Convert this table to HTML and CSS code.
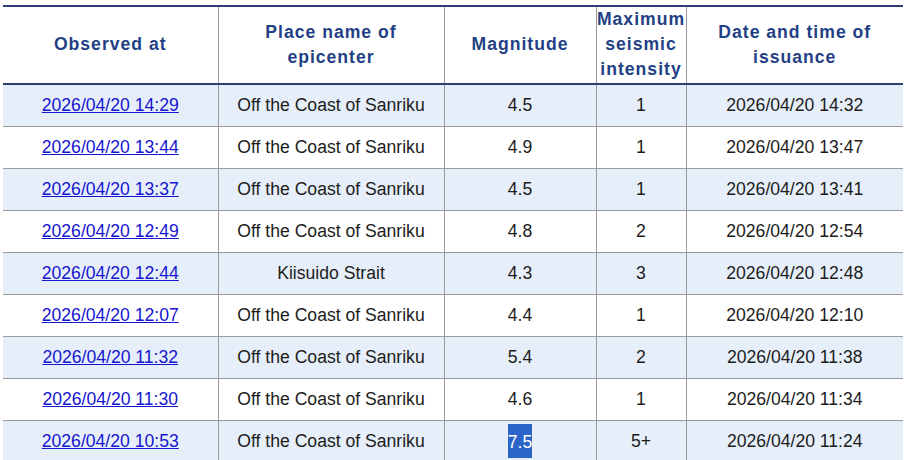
FILE: index.html
```html
<!DOCTYPE html>
<html lang="en">
<head>
<meta charset="utf-8">
<title>Earthquake information</title>
<link rel="stylesheet" href="styles.css">
</head>
<body>
<table class="quake">
  <colgroup>
    <col class="c-obs"><col class="c-place"><col class="c-mag"><col class="c-int"><col class="c-iss">
  </colgroup>
  <thead>
    <tr>
      <th>Observed at</th>
      <th>Place name of<br>epicenter</th>
      <th>Magnitude</th>
      <th>Maximum<br>seismic<br>intensity</th>
      <th>Date and time of<br>issuance</th>
    </tr>
  </thead>
  <tbody>
    <tr><td><a href="#">2026/04/20 14:29</a></td><td>Off the Coast of Sanriku</td><td>4.5</td><td>1</td><td>2026/04/20 14:32</td></tr>
    <tr><td><a href="#">2026/04/20 13:44</a></td><td>Off the Coast of Sanriku</td><td>4.9</td><td>1</td><td>2026/04/20 13:47</td></tr>
    <tr><td><a href="#">2026/04/20 13:37</a></td><td>Off the Coast of Sanriku</td><td>4.5</td><td>1</td><td>2026/04/20 13:41</td></tr>
    <tr><td><a href="#">2026/04/20 12:49</a></td><td>Off the Coast of Sanriku</td><td>4.8</td><td>2</td><td>2026/04/20 12:54</td></tr>
    <tr><td><a href="#">2026/04/20 12:44</a></td><td>Kiisuido Strait</td><td>4.3</td><td>3</td><td>2026/04/20 12:48</td></tr>
    <tr><td><a href="#">2026/04/20 12:07</a></td><td>Off the Coast of Sanriku</td><td>4.4</td><td>1</td><td>2026/04/20 12:10</td></tr>
    <tr><td><a href="#">2026/04/20 11:32</a></td><td>Off the Coast of Sanriku</td><td>5.4</td><td>2</td><td>2026/04/20 11:38</td></tr>
    <tr><td><a href="#">2026/04/20 11:30</a></td><td>Off the Coast of Sanriku</td><td>4.6</td><td>1</td><td>2026/04/20 11:34</td></tr>
    <tr><td><a href="#">2026/04/20 10:53</a></td><td>Off the Coast of Sanriku</td><td><span class="sel">7.5</span></td><td>5+</td><td>2026/04/20 11:24</td></tr>
  </tbody>
</table>
</body>
</html>
```

FILE: styles.css
```css
html, body {
  margin: 0;
  padding: 0;
  background: #ffffff;
}
body {
  padding: 5px 0 0 3px;
  font-family: "Liberation Sans", Arial, sans-serif;
}
.quake {
  border-collapse: collapse;
  table-layout: fixed;
  width: 900px;
  border-top: 2px solid #2c3f73;
}
.c-obs { width: 215px; }
.c-place { width: 226px; }
.c-mag { width: 152px; }
.c-int { width: 90px; }
.c-iss { width: 217px; }

.quake th {
  font-size: 17.6px;
  line-height: 25.2px;
  letter-spacing: 1px;
  font-weight: bold;
  color: #233f85;
  text-align: center;
  vertical-align: middle;
  padding: 0;
  height: 75px;
  border-bottom: 2px solid #2c3f73;
  border-left: 1px solid #9a9a9a;
}
.quake th:first-child,
.quake td:first-child {
  border-left: none;
}
.quake td {
  font-size: 17.6px;
  line-height: 22px;
  color: #1c1c1c;
  text-align: center;
  vertical-align: middle;
  padding: 0;
  height: 41px;
  border-left: 1px solid #9a9a9a;
  border-top: 1px solid #9a9a9a;
}
.quake thead + tbody tr:first-child td {
  border-top: none;
}
.quake tbody tr:nth-child(odd) td {
  background: #e6eff9;
}
.quake a {
  color: #1515d0;
  text-decoration: underline;
}
.sel {
  display: inline-block;
  background: #2c65c9;
  color: #ffffff;
  height: 34px;
  line-height: 36px;
  vertical-align: middle;
}
```
